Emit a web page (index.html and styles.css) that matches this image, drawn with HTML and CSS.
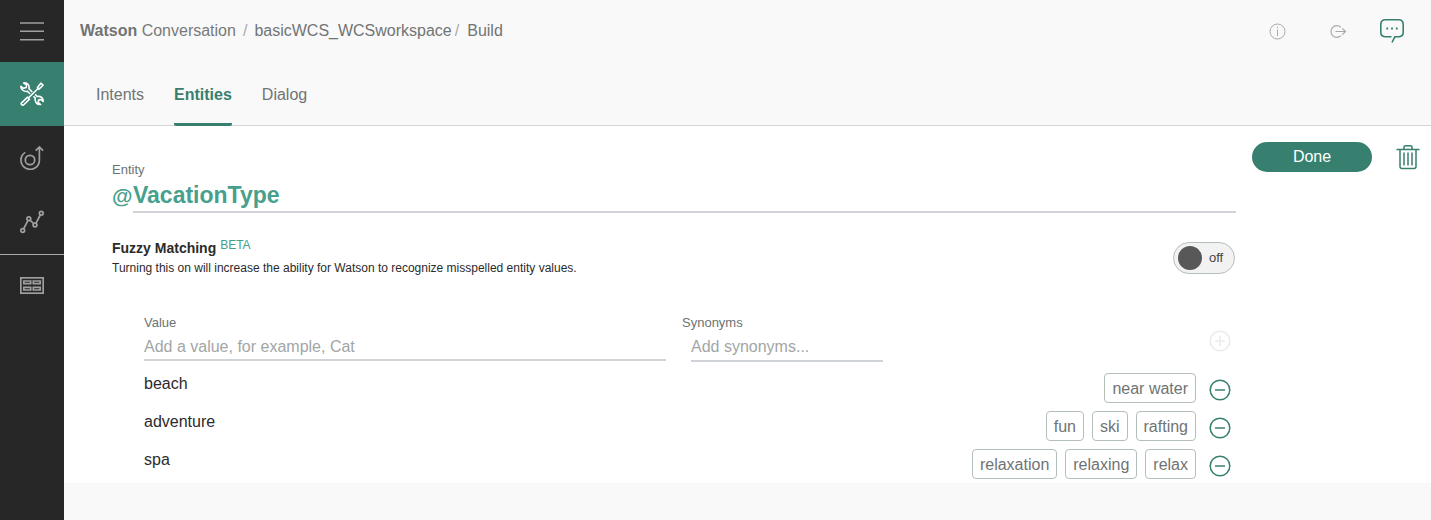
FILE: index.html
```html
<!DOCTYPE html>
<html lang="en">
<head>
<meta charset="utf-8">
<title>Watson Conversation</title>
<link rel="stylesheet" href="styles.css">
</head>
<body>
<div class="app">
  <nav class="rail" aria-label="Main">
    <button class="rail-item rail-menu" type="button" aria-label="Menu">
      <svg width="24" height="20" viewBox="0 0 24 20" fill="none" stroke="#a0a0a0" stroke-width="1.5"><path d="M0 2h24M0 10.2h24M0 18.800h24"/></svg>
    </button>
    <a class="rail-item rail-active" href="#" aria-label="Build">
      <svg width="24" height="24" viewBox="0 0 24 24" fill="none" stroke="#fff" stroke-width="1.6" stroke-linejoin="round" stroke-linecap="round">
        <path d="M9.6 11.5 7.5 9.300C4.500 10 .8 8 .9 4.300L3.500 6.300 6.300 5.400 6.400 2.700 3.700 1C7 .2 9.800 3 9 6.800L11.800 9.600"/>
        <path d="M14 14.700 15.200 16.100C14.600 19.800 17 23 20.600 22.500L18.300 20.600 18.500 18.100 21 17.500 23.100 19.500C23.500 16 20.500 13.700 17.300 14.600L15.600 12.900"/>
        <path d="M1.300 21.200 7.600 15.200 9.500 17.200 3.500 23Q2.500 23.300 1.700 22.600T1.300 21.200ZM8.400 16 18 6.500M17.500 5.500 20.800 1.200 23 3.200 19 7.100Z"/>
      </svg>
    </a>
    <a class="rail-item" href="#" aria-label="Deploy">
      <svg width="24" height="24" viewBox="0 0 24 24" fill="none" stroke="#a0a0a0" stroke-width="1.7">
        <circle cx="10" cy="14" r="4.700"/>
        <path d="M5.200 6.400A9.200 9.200 0 1 0 19.400 14V1M15.700 4.700 19.400 1 23.100 4.700"/>
      </svg>
    </a>
    <a class="rail-item" href="#" aria-label="Improve">
      <svg width="24" height="24" viewBox="0 0 24 24" fill="none" stroke="#a0a0a0" stroke-width="1.700">
        <circle cx="2.700" cy="20.500" r="1.900"/><circle cx="8.800" cy="8.800" r="1.900"/><circle cx="15" cy="15" r="1.900"/><circle cx="21.300" cy="3.200" r="1.900"/>
        <path d="M3.700 18.700 7.900 10.600M10.200 10.300 13.600 13.500M16 13.200 20.300 5"/>
      </svg>
    </a>
    <a class="rail-item rail-split" href="#" aria-label="Workspaces">
      <svg width="24" height="17" viewBox="0 0 24 17" fill="none" stroke="#a0a0a0" stroke-width="1.700">
        <rect x=".8" y=".8" width="22.400" height="15.400"/>
        <path d="M3.800 4h6.900v2.700h-6.900zM13.300 4h6.900v2.700h-6.900zM3.800 10.300h6.900V13h-6.900zM13.300 10.300h6.900V13h-6.900z"/>
      </svg>
    </a>
  </nav>

  <div class="page">
    <header class="header">
      <div class="topbar">
        <nav class="crumbs" aria-label="Breadcrumb">
          <a href="#"><b>Watson</b> <span class="light">Conversation</span></a>
          <span class="slash">/</span>
          <a href="#">basicWCS_WCSworkspace</a>
          <span class="slash slash-tight">/</span>
          <a href="#">Build</a>
        </nav>
        <div class="tools">
          <button class="icon-btn" type="button" aria-label="Information">
            <svg width="17" height="17" viewBox="0 0 17 17" fill="none" stroke="#aaa"><circle cx="8.500" cy="8.500" r="7.500"/><path d="M8.500 6.500v6.500M8.500 3.700v1.400"/></svg>
          </button>
          <button class="icon-btn" type="button" aria-label="Log out">
            <svg width="17" height="17" viewBox="0 0 17 17" fill="none" stroke="#aaa" stroke-width="1.200"><path d="M10.800 4.300A5.800 5.800 0 1 0 10.800 12.700M5.500 8.500h10M12.300 5.300l3.200 3.200-3.200 3.200"/></svg>
          </button>
          <button class="icon-btn chat" type="button" aria-label="Try it out">
            <svg width="24" height="24" viewBox="0 0 24 24" fill="none" stroke="#37806f" stroke-width="1.600">
              <path d="M12 23.500 14.800 17.800H18.500Q23.200 17.800 23.200 13.200V5.500Q23.200 .8 18.500 .8H5.500Q.8 .8 .8 5.500V13.200Q.8 17.800 5.500 17.800H11.500"/>
              <path d="M6.300 9.500h1.800M11.100 9.500h1.800M15.900 9.500h1.800" stroke-width="1.800"/>
            </svg>
          </button>
        </div>
      </div>
      <nav class="tabs" aria-label="Workspace">
        <a class="tab" href="#">Intents</a>
        <a class="tab tab-current" href="#" aria-current="page">Entities</a>
        <a class="tab" href="#">Dialog</a>
      </nav>
    </header>

    <main class="content">
      <section class="editor">
        <label class="caption" for="entity">Entity</label>
        <div class="entity">
          <span class="at">@</span>
          <input class="entity-name" id="entity" type="text" value="VacationType">
        </div>

        <div class="fuzzy">
          <div>
            <h2 class="fuzzy-title">Fuzzy Matching <sup class="beta">BETA</sup></h2>
            <p class="fuzzy-text">Turning this on will increase the ability for Watson to recognize misspelled entity values.</p>
          </div>
          <label class="switch"><input class="knob" type="checkbox" aria-label="Fuzzy Matching"><span>off</span></label>
        </div>

        <div class="values">
          <form class="add-row">
            <div class="field">
              <label class="caption" for="value">Value</label>
              <input class="line-input" id="value" type="text" placeholder="Add a value, for example, Cat">
            </div>
            <div class="field">
              <label class="caption" for="synonyms">Synonyms</label>
              <input class="line-input synonym-input" id="synonyms" type="text" placeholder="Add synonyms...">
            </div>
            <button class="icon-btn add" type="button" aria-label="Add value" disabled>
              <svg width="22" height="22" viewBox="0 0 22 22" fill="none" stroke="#ebebeb" stroke-width="1.500"><circle cx="11" cy="11" r="9.800"/><path d="M6 11h10M11 6v10"/></svg>
            </button>
          </form>
          <div class="value-row">
            <span class="value">beach</span>
            <div class="chips"><span class="chip">near water</span></div>
            <button class="icon-btn remove" type="button" aria-label="Remove beach">
              <svg width="22" height="22" viewBox="0 0 22 22" fill="none" stroke="#37806f" stroke-width="1.500"><circle cx="11" cy="11" r="9.800"/><path d="M6 11h10"/></svg>
            </button>
          </div>
          <div class="value-row">
            <span class="value">adventure</span>
            <div class="chips"><span class="chip">fun</span><span class="chip">ski</span><span class="chip">rafting</span></div>
            <button class="icon-btn remove" type="button" aria-label="Remove adventure">
              <svg width="22" height="22" viewBox="0 0 22 22" fill="none" stroke="#37806f" stroke-width="1.500"><circle cx="11" cy="11" r="9.800"/><path d="M6 11h10"/></svg>
            </button>
          </div>
          <div class="value-row">
            <span class="value">spa</span>
            <div class="chips"><span class="chip">relaxation</span><span class="chip">relaxing</span><span class="chip">relax</span></div>
            <button class="icon-btn remove" type="button" aria-label="Remove spa">
              <svg width="22" height="22" viewBox="0 0 22 22" fill="none" stroke="#37806f" stroke-width="1.500"><circle cx="11" cy="11" r="9.800"/><path d="M6 11h10"/></svg>
            </button>
          </div>
        </div>
      </section>

      <aside class="actions">
        <button class="done" type="button">Done</button>
        <button class="icon-btn" type="button" aria-label="Delete entity">
          <svg width="24" height="26" viewBox="0 0 24 26" fill="none" stroke="#37806f" stroke-width="1.500">
            <path d="M.5 5.500h23M8 5V3.300Q8 1.800 9.500 1.800H14.500Q16 1.800 16 3.300V5M4 6V22.500Q4 24.500 6 24.500H18Q20 24.500 20 22.500V6"/>
            <path d="M8 8.500v13M12 8.500v13M16 8.500v13"/>
          </svg>
        </button>
      </aside>
    </main>
  </div>
</div>
</body>
</html>
```

FILE: styles.css
```css
* {
  box-sizing: border-box;
}

body {
  margin: 0;
  background: #f9f9f9;
  color: #2b2b2b;
  font: 16px/22px "Liberation Sans", Arial, sans-serif;
}

a {
  color: inherit;
  text-decoration: none;
}

button,
input {
  margin: 0;
  font: inherit;
}

svg {
  display: block;
}

.app {
  display: flex;
  min-height: 100vh;
}

.rail {
  display: flex;
  flex: 0 0 64px;
  flex-direction: column;
  background: #272727;
}

.rail-item {
  display: flex;
  align-items: center;
  justify-content: center;
  height: 64px;
  padding: 0;
  border: 0;
  background: none;
}

.rail-menu {
  height: 62px;
}

.rail-active {
  background: #37806f;
}

.rail-split {
  height: 62px;
  border-top: 1px solid #aaa;
}

.page {
  flex: 1;
  min-width: 0;
}

.header {
  border-bottom: 1px solid #d5d5d8;
  color: #717474;
}

.topbar {
  display: flex;
  align-items: center;
  justify-content: space-between;
  height: 62px;
  padding: 0 27px 0 16px;
}

.crumbs {
  display: flex;
}

.light {
  color: #777a7a;
}

.slash {
  padding: 0 7px;
  color: #aaa;
}

.slash-tight {
  padding: 0 8px 0 3px;
}

.tools {
  display: flex;
  align-items: center;
}

.icon-btn {
  display: flex;
  padding: 0;
  border: 0;
  background: none;
}

.tools .icon-btn + .icon-btn {
  margin-left: 44px;
}

.tools .icon-btn + .chat {
  margin-left: 33px;
}

.tabs {
  display: flex;
  gap: 30px;
  height: 63px;
  padding-left: 32px;
}

.tab {
  height: 64px;
  padding-top: 22px;
}

.tab-current {
  border-bottom: 3px solid #37806f;
  border-radius: 2px;
  color: #37806f;
  font-weight: bold;
}

.content {
  display: flex;
  gap: 16px;
  padding: 16px 11px 4px 48px;
  background: #fff;
}

.editor {
  flex: 1;
  min-width: 0;
  padding-top: 19px;
}

.caption {
  display: block;
  color: #6b7373;
  font-size: 13px;
  line-height: 18px;
}

.entity {
  display: flex;
  align-items: baseline;
  color: #47a08c;
  font-weight: bold;
}

.at {
  width: 21px;
  font-size: 21px;
}

.entity-name {
  flex: 1;
  min-width: 0;
  height: 34px;
  padding: 0;
  border: 0;
  border-bottom: 2px solid #d0d4d8;
  background: none;
  color: inherit;
  font-size: 23px;
}

.fuzzy {
  display: flex;
  justify-content: space-between;
  margin-top: 24px;
}

.fuzzy-title {
  margin: 0;
  font-size: 14px;
  line-height: 22px;
}

.beta {
  color: #47a08c;
  font-size: 12px;
  font-weight: normal;
  line-height: 1;
  vertical-align: 4px;
}

.fuzzy-text {
  margin: 0;
  font-size: 12px;
  line-height: 18px;
}

.switch {
  display: flex;
  align-items: center;
  gap: 7px;
  width: 62px;
  height: 32px;
  margin: 5px 1px 0 0;
  padding-left: 4px;
  border: 1px solid #b4bfbc;
  border-radius: 16px;
  background: #f2f2f2;
  color: #444;
  font-size: 13px;
}

.knob {
  width: 24px;
  height: 24px;
  border-radius: 50%;
  background: #585858;
  appearance: none;
}

.values {
  display: grid;
  gap: 8px;
  padding: 37px 0 0 32px;
}

.add-row {
  display: grid;
  grid-template-columns: 1fr 16px 1fr 32px;
  height: 51px;
}

.field + .field {
  grid-column: 3;
}

.value-row {
  display: grid;
  grid-template-columns: 1fr auto 32px;
  min-height: 30px;
}

.line-input {
  display: block;
  width: 100%;
  height: 29px;
  padding: 2px 0 0;
  border: 0;
  border-bottom: 2px solid #d0d4d8;
  background: none;
}

.line-input::placeholder {
  color: #a2a6a6;
  opacity: 1;
}

.synonym-input {
  width: 192px;
  height: 30px;
  margin-left: 9px;
}

.add,
.remove {
  align-items: flex-start;
  justify-content: center;
}

.add {
  padding-top: 16px;
}

.remove {
  padding-top: 6px;
}

.chips {
  display: flex;
  flex-wrap: wrap;
  gap: 8px;
  justify-content: flex-end;
  padding-right: 8px;
}

.chip {
  height: 30px;
  padding: 4px 7px 0;
  border: 1px solid #b4bfbc;
  border-radius: 4px;
  color: #6f7474;
}

.actions {
  display: flex;
  align-items: center;
  align-self: flex-start;
  gap: 24px;
}

.done {
  width: 120px;
  height: 30px;
  padding: 0;
  border: 0;
  border-radius: 15px;
  background: #37806f;
  color: #fff;
}
```
